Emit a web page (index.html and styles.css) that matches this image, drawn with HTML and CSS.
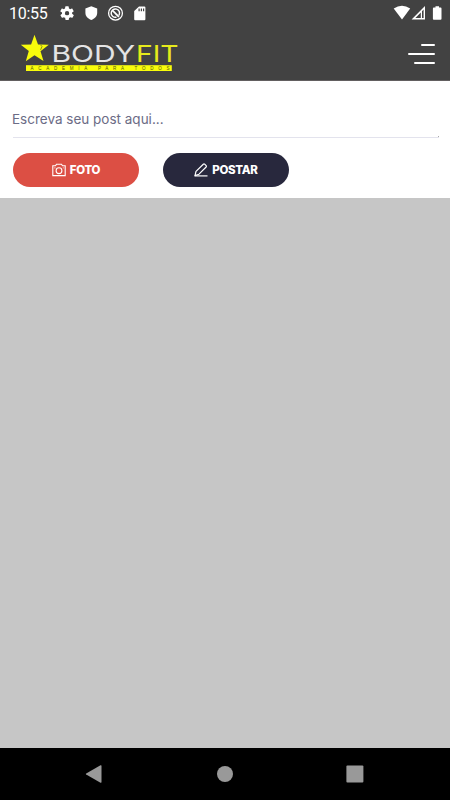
FILE: index.html
```
<!DOCTYPE html>
<html lang="pt-BR">
<head>
    <meta charset="UTF-8">
    <meta name="viewport" content="width=device-width, initial-scale=1.0">
    <title>BodyFit</title>
    <link rel="stylesheet" href="styles.css">
</head>
<body>
    <div class="status-bar">
        <span class="time">10:55</span>
        <svg class="status-icons" width="90" height="28" viewBox="58 0 90 28">
            <g fill="#fff">
                <path transform="translate(58.9 5) scale(.68)" d="M19.4 13a7.500 7.500 0 0 0 0-2l2.100-1.600a.5.5 0 0 0 .1-.7l-2-3.400a.5.5 0 0 0-.6-.2l-2.500 1a7.300 7.300 0 0 0-1.700-1l-.4-2.600a.5.5 0 0 0-.5-.5h-4a.5.5 0 0 0-.5.500l-.4 2.600a7.700 7.700 0 0 0-1.700 1l-2.500-1a.5.5 0 0 0-.6.2l-2 3.400a.5.5 0 0 0 .1.700L4.600 11a8 8 0 0 0 0 2l-2.100 1.600a.5.5 0 0 0-.1.700l2 3.400c.1.2.4.3.6.2l2.500-1a7.300 7.300 0 0 0 1.700 1l.4 2.600c0 .3.2.5.500.5h4c.3 0 .5-.2.500-.5l.4-2.600a7.700 7.700 0 0 0 1.700-1l2.500 1c.2.1.5 0 .6-.2l2-3.400a.5.5 0 0 0-.1-.7zM12 15.200a3.200 3.200 0 1 1 0-6.400 3.200 3.200 0 0 1 0 6.400z"/>
                <path d="M91.300 6.200l5.900 2.300v4.300c0 3.400-2.500 6.100-5.900 7.200-3.400-1.100-5.900-3.800-5.900-7.200V8.500z"/>
                <path fill-rule="evenodd" d="M139 6.500h5.400q1 0 1 1v11.800q0 1-1 1h-9.200q-1 0-1-1V11zM138.500 8.500v2.700h1.200V8.500zM140.800 8.500v2.700h1.200V8.500zM143 8.500v2.700h1.200V8.500z"/>
            </g>
            <g fill="none" stroke="#fff">
                <circle cx="115.500" cy="13.200" r="6.900" stroke-width="1.300"/>
                <path d="M119 15.300a4.200 4.200 0 1 0-2.500 1.900" stroke-width="1.500"/>
                <path d="M112.700 10.600l6.200 6.200" stroke-width="1.800"/>
            </g>
        </svg>
        <svg class="signal-icons" width="50" height="28" viewBox="393 0 50 28">
            <path d="M393.700 8.600q8.300-5.600 16.500 0L402 19.400z" fill="#fff"/>
            <path d="M425 6v13.400h-13.400z" fill="#fff"/>
            <path d="M423.600 9.600v8.400h-1.600v-6.800zM420.800 12.500v5.500h-5.400z" fill="#424242"/>
            <path d="M435.500 6.300h3.500v1.300h1.600q.9 0 .9.900v10.300q0 .9-.9.900h-6.800q-.9 0-.9-.9V8.500q0-.9.900-.9h1.700z" fill="#fff"/>
        </svg>
    </div>

    <header class="header">
        <svg class="logo" width="160" height="40" viewBox="20 33 160 40">
            <path d="M34.500 34.800l3.500 9.700 10.800.2-8.300 6.500 3 9.800-9-5.800-8.700 6 3-10.300-8-6.200 10.300-.2z" fill="#f8fc0b"/>
            <path d="M40.600 49.800l1.400-3.300-1.400-1.600" fill="none" stroke="#6c6d25" stroke-width=".8"/>
            <text class="logo-body" x="51.500" y="61.500" textLength="83.500" lengthAdjust="spacingAndGlyphs">BODY</text>
            <text class="logo-fit" x="136" y="61.500" textLength="42.500" lengthAdjust="spacingAndGlyphs">FIT</text>
            <rect x="26" y="65.200" width="145.800" height="5.800" fill="#f8fc0b"/>
            <text class="logo-sub" x="30.500" y="69.800" textLength="139">ACADEMIA PARA TODOS</text>
        </svg>
        <div class="menu">
            <span class="line short"></span>
            <span class="line"></span>
            <span class="line medium"></span>
        </div>
    </header>

    <form class="post-form">
        <div class="post-field">
            <span class="placeholder">Escreva seu post aqui...</span>
        </div>
        <div class="buttons">
            <button type="button" class="btn btn-foto">
                <svg width="14" height="14" viewBox="0 0 14 14" fill="none" stroke="#fff" stroke-width="1.100">
                    <path d="M.8 2.800h2.700l1-1.500h5l1 1.500h2.700v9.800H.8z"/>
                    <circle cx="7" cy="7.700" r="2.900"/>
                    <path d="M2.200 4.900h1.300M10.800 4.900h1" stroke-width=".8"/>
                </svg>
                <span class="foto-text">FOTO</span>
            </button>
            <button type="button" class="btn btn-postar">
                <svg width="14" height="14" viewBox="0 0 14 14" fill="none" stroke="#fff" stroke-width="1.200">
                    <path d="M1 12.600l1-4.200L9.300 1.200q.7-.6 1.400 0l1.400 1.400q.6.700 0 1.400L5 11.200z" stroke-linejoin="round"/>
                    <path d="M.5 12.900h13"/>
                </svg>
                <span class="postar-text">POSTAR</span>
            </button>
        </div>
    </form>

    <main class="feed"></main>

    <nav class="nav-bar">
        <svg width="18" height="20" viewBox="0 0 18 20"><path d="M15.500 1.300q1-.5 1 .6v16.200q0 1.100-1 .6L1.200 10.600q-.9-.6 0-1.200z" fill="#999"/></svg>
        <svg width="18" height="20" viewBox="0 0 18 20"><circle cx="9" cy="10" r="8" fill="#999"/></svg>
        <svg width="18" height="20" viewBox="0 0 18 20"><rect x=".4" y="1.500" width="17" height="17" rx="1" fill="#999"/></svg>
    </nav>
</body>
</html>
```
FILE: styles.css
```
* {
    box-sizing: border-box;
}

body {
    margin: 0;
    height: 100vh;
    display: flex;
    flex-direction: column;
    background-color: #c6c6c6;
    font-family: Inter, sans-serif;
    overflow: hidden;
}

.status-bar {
    display: flex;
    align-items: center;
    height: 28px;
    padding: 0 7px 0 9px;
    background-color: #424242;
}

.time {
    width: 49px;
    color: #fff;
    font-family: Roboto, sans-serif;
    font-size: 16px;
    line-height: 28px;
    letter-spacing: -0.3px;
}

.signal-icons {
    margin-left: auto;
}

.header {
    display: flex;
    justify-content: space-between;
    height: 53px;
    padding: 5px 15px 0 20px;
    background-color: #424242;
    border-bottom: 1px solid #625f60;
}

.logo-body,
.logo-fit {
    font-family: Inter, sans-serif;
    font-size: 23.5px;
    font-weight: 400;
    fill: #e4e4e4;
}

.logo-fit {
    fill: #e6ea1c;
}

.logo-sub {
    font-family: "Liberation Sans", sans-serif;
    font-size: 4.5px;
    fill: #55570f;
}

.menu {
    display: flex;
    flex-direction: column;
    align-items: flex-end;
    gap: 7px;
    padding-top: 11px;
}

.line {
    width: 27px;
    height: 2px;
    border-radius: 1px;
    background-color: #fff;
}

.short {
    width: 14px;
}

.medium {
    width: 21px;
}

.post-form {
    height: 117px;
    padding: 0 11px 0 13px;
    background-color: #fff;
}

.post-field {
    display: flex;
    justify-content: space-between;
    align-items: flex-start;
    height: 57px;
    padding-top: 27px;
    border-bottom: 1px solid #e3e3ed;
}

.post-field::after {
    content: "";
    align-self: flex-end;
    width: 1px;
    height: 1px;
    background-color: #aaa;
}

.placeholder {
    display: block;
    margin-left: -1px;
    color: #6c6c86;
    font-size: 13.500px;
    line-height: 22px;
    white-space: nowrap;
}

.buttons {
    display: flex;
    gap: 24px;
    padding-top: 15px;
}

.btn {
    display: flex;
    align-items: center;
    justify-content: center;
    gap: 4px;
    width: 126px;
    height: 34px;
    padding: 0;
    border: none;
    border-radius: 18px;
    color: #fff;
    font-family: Inter, sans-serif;
    font-size: 11.500px;
    font-weight: 800;
    letter-spacing: -0.3px;
}

.btn-foto {
    background-color: #dc4f44;
}

.btn-postar {
    background-color: #28283d;
}

.feed {
    flex: 1;
}

.nav-bar {
    display: flex;
    align-items: center;
    justify-content: space-between;
    height: 52px;
    padding: 0 86px 0 85px;
    background-color: #000;
}
```
